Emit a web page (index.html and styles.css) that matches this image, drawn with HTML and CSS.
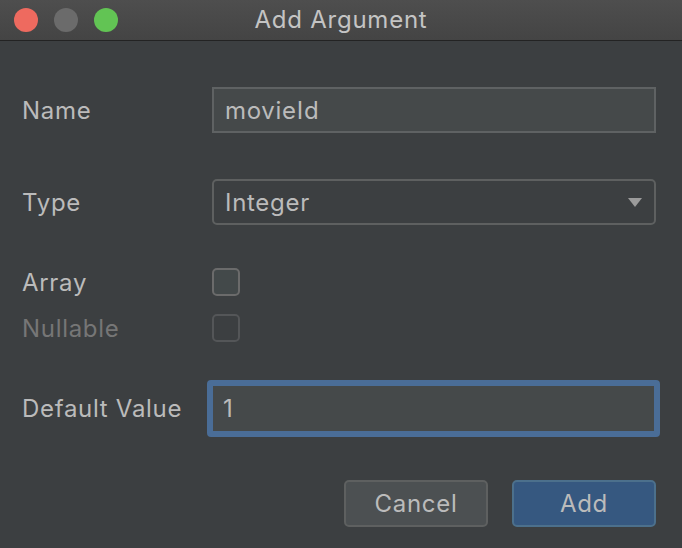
FILE: index.html
```html
<!DOCTYPE html>
<html>
<head>
<meta charset="utf-8">
<link rel="stylesheet" href="styles.css">
</head>
<body>
<div class="window">
  <div class="titlebar">
    <div class="lights">
      <span class="light red"></span>
      <span class="light gray"></span>
      <span class="light green"></span>
    </div>
    <div class="title">Add Argument</div>
  </div>
  <div class="content">
    <div class="row row-name">
      <div class="label">Name</div>
      <div class="field input">movieId</div>
    </div>
    <div class="row row-type">
      <div class="label">Type</div>
      <div class="field select">
        <span>Integer</span>
        <svg class="arrow" width="14" height="9" viewBox="0 0 14 9"><path d="M0 0 H14 L7 9 Z" fill="#9b9b9b"/></svg>
      </div>
    </div>
    <div class="row row-array">
      <div class="label">Array</div>
      <div class="check"></div>
    </div>
    <div class="row row-null">
      <div class="label disabled">Nullable</div>
      <div class="check check-disabled"></div>
    </div>
    <div class="row row-default">
      <div class="label">Default Value</div>
      <div class="field focused">1</div>
    </div>
    <div class="buttons">
      <div class="btn cancel">Cancel</div>
      <div class="btn add">Add</div>
    </div>
  </div>
</div>
</body>
</html>
```
FILE: styles.css
```css
* { box-sizing: border-box; }
html, body { margin: 0; padding: 0; background: #3c3f41; }
body {
  font-family: Inter, "Liberation Sans", sans-serif;
  color: #bbbbbb;
  letter-spacing: 0.7px;
}
.window {
  width: 682px;
  height: 548px;
  background: #3c3f41;
  overflow: hidden;
}
.titlebar {
  height: 41px;
  background: linear-gradient(#4e4e4e, #444444);
  border-bottom: 1px solid #232323;
  display: flex;
  align-items: center;
  justify-content: center;
  position: relative;
}
.lights {
  position: absolute;
  left: 14px;
  top: 8px;
  display: flex;
  gap: 16px;
}
.light {
  width: 24px;
  height: 24px;
  border-radius: 50%;
  display: block;
}
.red { background: #ee6a5f; }
.gray { background: #6b6b6b; }
.green { background: #62c454; }
.title {
  font-size: 24px;
  color: #c4c4c4;
  margin-top: -1px;
  letter-spacing: 0.75px;
}
.content {
  padding: 46px 26px 0 22px;
  display: flex;
  flex-direction: column;
}
.row {
  display: flex;
  align-items: center;
}
.label {
  width: 190px;
  font-size: 24px;
  color: #bbbbbb;
  flex: none;
  white-space: nowrap;
}
.label.disabled { color: #767676; }
.field {
  flex: 1;
  height: 46px;
  font-size: 24px;
  display: flex;
  align-items: center;
  padding-left: 11px;
}
.input {
  background: #45494a;
  border: 2px solid #5f6263;
}
.select {
  background: #3c3f41;
  border: 2px solid #5e6060;
  border-radius: 5px;
  justify-content: space-between;
  padding-right: 12px;
}
.arrow { display: block; margin-top: 1px; }
.row-type { margin-top: 46px; }
.row-array { margin-top: 43px; height: 28px; }
.row-null { margin-top: 18px; height: 28px; }
.check {
  width: 28px;
  height: 28px;
  border: 2px solid #6b6b6b;
  border-radius: 5px;
  background: #43494a;
}
.check-disabled {
  border-color: #545658;
  background: #3c3f41;
}
.row-default { margin-top: 38px; }
.focused {
  margin-left: -5px;
  margin-right: -4px;
  height: 57px;
  border: 6px solid #4a6d97;
  border-radius: 4px;
  background: #45494a;
  padding-left: 10px;
}
.buttons {
  margin-top: 43px;
  display: flex;
  justify-content: flex-end;
  gap: 24px;
}
.btn {
  width: 144px;
  height: 47px;
  border-radius: 5px;
  display: flex;
  align-items: center;
  justify-content: center;
  font-size: 24px;
  color: #bbbbbb;
}
.cancel {
  background: #4c5052;
  border: 2px solid #5e6060;
}
.add {
  background: #365880;
  border: 2px solid #4c708c;
}
```
